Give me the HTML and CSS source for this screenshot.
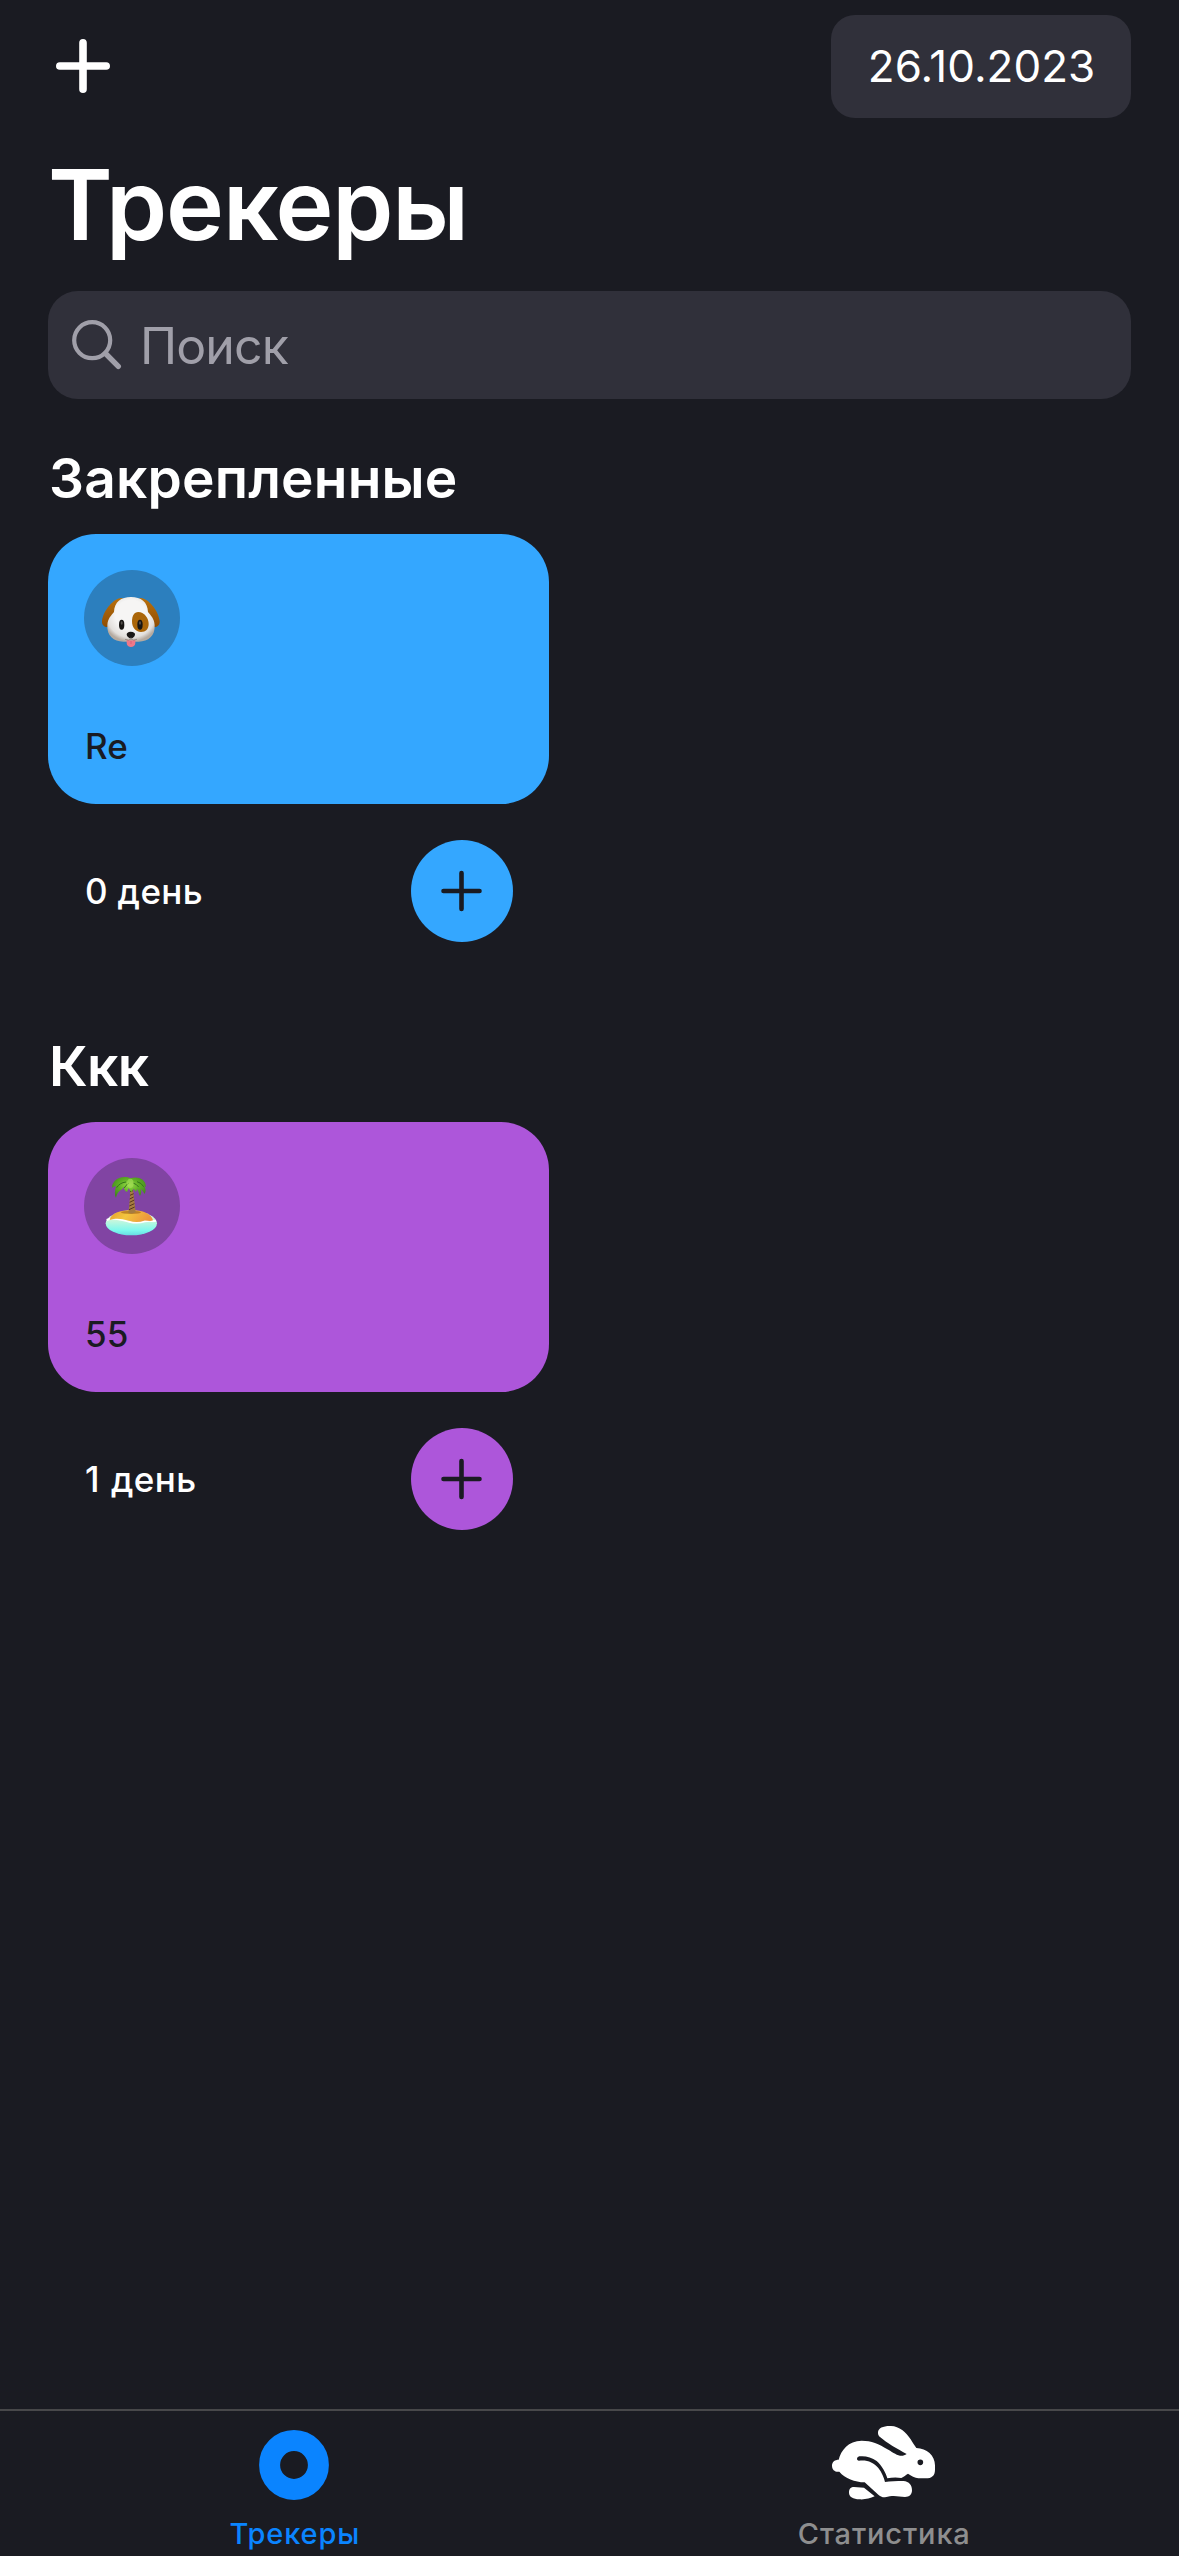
FILE: index.html
```html
<!DOCTYPE html>
<html lang="ru">
<head>
<meta charset="utf-8">
<title>Трекеры</title>
<link rel="stylesheet" href="styles.css">
</head>
<body>
<div class="app">
  <main class="content">
    <header class="topbar">
      <button class="add" aria-label="Добавить">
        <svg width="54" height="54" viewBox="0 0 54 54"><path d="M27 3.8v46.4M3.8 27h46.4" stroke="#fff" stroke-width="7.6" stroke-linecap="round"/></svg>
      </button>
      <div class="date"><span>26.10.2023</span></div>
    </header>
    <h1 class="title">Трекеры</h1>
    <div class="search">
      <svg width="50" height="50" viewBox="0 0 50 50" fill="none" stroke="#a09fa9"><circle cx="20.2" cy="20.2" r="18" stroke-width="4.2"/><path d="M33.5 33.5L46.3 46.3" stroke-width="5.4" stroke-linecap="round"/></svg>
      <span class="placeholder">Поиск</span>
    </div>

    <section class="category">
      <h2 class="category-title pinned">Закрепленные</h2>
      <article class="tracker blue">
        <div class="card">
          <svg class="emoji" width="96" height="96" viewBox="12 15 288 288">
            <defs>
              <radialGradient id="fur" cx=".5" cy=".4" r=".6"><stop offset=".55" stop-color="#f6f5f4"/><stop offset=".85" stop-color="#e2dfdc"/><stop offset="1" stop-color="#b5aaa0"/></radialGradient>
              <linearGradient id="ear" x1="0" y1="0" x2="0" y2="1"><stop offset="0" stop-color="#b9700d"/><stop offset="1" stop-color="#8f4d03"/></linearGradient>
            </defs>
            <circle class="badge" cx="156" cy="159" r="144"/>
            <path fill="url(#ear)" d="M128 99C106 95 70 133 66 168c-1 11 6 18 14 18 14 0 22-16 26-36zM178 99c22-4 57 34 61 69 1 11-6 18-14 18-14 0-22-16-26-36z"/>
            <path fill="url(#fur)" d="M153 96c30 0 50 15 51 45 8 10 19 20 20 39 2 33-19 49-48 50h-46c-29-1-50-17-48-50 1-19 12-29 20-39 1-30 21-45 51-45z"/>
            <path fill="#aa6508" d="M175 141c17 0 31 18 31 36 0 15-9 24-23 24-17 0-27-14-27-32 0-16 6-28 19-28z"/>
            <ellipse cx="125" cy="179" rx="8" ry="15" fill="#171513"/><ellipse cx="180" cy="179" rx="8" ry="15" fill="#171513"/>
            <ellipse cx="125" cy="174" rx="3" ry="5" fill="#54504c"/><ellipse cx="180" cy="174" rx="3" ry="5" fill="#54504c"/>
            <path fill="#ee7889" d="M140 224c7 3 19 3 26 0v10c0 16-26 16-26 0z"/><path d="M153 227v10" stroke="#c95770" stroke-width="2"/>
            <path fill="#191716" d="M152 200c9 0 14 4 13 9-1 6-7 11-12 11s-12-5-13-11c0-5 4-9 12-9z"/>
            <path d="M153 217v6M135 223q12 5 18-1 7 6 18 1" fill="none" stroke="#81766c" stroke-width="2"/>
          </svg>
          <span class="name">Re</span>
        </div>
        <footer class="progress">
          <span class="days">0 день</span>
          <button class="done" aria-label="Отметить"><svg width="42" height="42" viewBox="0 0 42 42"><path d="M20.5 3v36M2.500 21h36" stroke="#1a1b22" stroke-width="4.6" stroke-linecap="round"/></svg></button>
        </footer>
      </article>
    </section>

    <section class="category">
      <h2 class="category-title short">Ккк</h2>
      <article class="tracker purple">
        <div class="card">
          <svg class="emoji" width="96" height="96" viewBox="12 18 288 288">
            <defs>
              <linearGradient id="sea" x1="0" y1="0" x2="0" y2="1"><stop offset=".3" stop-color="#d6f6d9"/><stop offset=".8" stop-color="#7bf8ee"/><stop offset="1" stop-color="#67dce2"/></linearGradient>
              <linearGradient id="sand" x1="0" y1="0" x2="1" y2=".2"><stop offset="0" stop-color="#e79b2d"/><stop offset=".45" stop-color="#f3c63e"/><stop offset="1" stop-color="#ee953c"/></linearGradient>
              <radialGradient id="leaf" cx=".5" cy=".4" r=".6"><stop offset="0" stop-color="#9bdc4c"/><stop offset=".5" stop-color="#5faf24"/><stop offset="1" stop-color="#42871d"/></radialGradient>
            </defs>
            <circle class="badge" cx="156" cy="162" r="144"/>
            <ellipse cx="154" cy="214" rx="77" ry="36" fill="url(#sea)"/>
            <path d="M80 204c22-10 43 0 68 5 21 5 34 3 46-1 12-3 24 0 34-2" fill="none" stroke="#fff" stroke-width="6"/>
            <path fill="url(#sand)" d="M89 204c3-19 31-30 65-30s61 12 65 31c-8 5-17 0-27 1-14 5-29 5-45 0-21-5-37-9-58-2z"/>
            <ellipse cx="153" cy="181" rx="30" ry="5" fill="#8c4b10" opacity=".5"/>
            <path fill="#a67b40" d="M150 105h9c1 25 6 50 8 76-7 4-15 4-22 1 4-27 6-52 5-77z"/>
            <path d="M150 119l9-3m-9 14l11-5m-12 16l12-6m-12 16l14-7m-15 18l15-7m-16 18l17-8" stroke="#55351d" stroke-width="3"/>
            <path fill="url(#leaf)" d="M151 79c-12-8-37-4-47 8-6 7-10 17-6 20 3-3 7-4 10-5-4 14-5 28 0 36 3-15 10-22 19-26l4-8c0 8 5 14 10 16l5-11 8 12 7-11 7 10 4-9c4 8 4 16 8 21 4-7 5-14 2-21 5 3 9 9 11 15 6-6 4-16 0-23l5 2c0-15-10-27-26-28-8-1-15 0-21 2z"/>
            <path fill="none" stroke="#347619" stroke-width="3" d="M138 90q-19 2-28 17m37-14q-11 7-14 15m26-15q11 3 17 12m-5-16q13 3 20 15"/>
            <ellipse cx="151" cy="94" rx="10" ry="14" fill="#a4df56" opacity=".65"/>
          </svg>
          <span class="name">55</span>
        </div>
        <footer class="progress">
          <span class="days one">1 день</span>
          <button class="done" aria-label="Отметить"><svg width="42" height="42" viewBox="0 0 42 42"><path d="M20.5 3v36M2.500 21h36" stroke="#1a1b22" stroke-width="4.6" stroke-linecap="round"/></svg></button>
        </footer>
      </article>
    </section>
  </main>

  <nav class="tabs">
    <a class="tab active">
      <span class="tab-icon"><svg width="70" height="70" viewBox="0 0 70 70"><circle cx="35" cy="35" r="24.4" fill="none" stroke="#0a84ff" stroke-width="21"/></svg></span>
      <span class="tab-label">Трекеры</span>
    </a>
    <a class="tab">
      <span class="tab-icon"><svg width="107" height="77" viewBox="150 80 321 231" fill="#fff" overflow="visible">
        <path fill-rule="evenodd" d="M294 97C294 82 312 76 333 77C358 78 378 95 392 117C398 127 404 136 409 143C440 144 465 165 465 195V208C465 226 455 234 437 234H415C405 233 393 226 384 220C377 223 372 230 364 233C350 230 335 231 322 234C318 218 305 195 290 182C275 170 255 166 238 168C229 170 229 181 237 181C262 178 280 186 295 203C305 215 312 232 315 245C330 243 350 242 370 242C388 243 396 255 396 270C396 283 388 290 375 290C355 290 345 283 315 291C305 291 300 287 295 283L254 246C225 245 195 235 178 214C165 216 156 208 156 196C156 184 165 178 176 178C183 150 205 121 245 121C275 121 295 130 325 148C345 160 362 174 380 161C350 145 320 128 301 111C295 106 294 102 294 97ZM412.500 186a8.500 8.500 0 1 0 17 0a8.500 8.500 0 1 0-17 0Z"/>
        <path d="M207 277C207 265 213 260 222 260L252 262L284 288C270 295 255 298 238 297C220 296 207 290 207 277Z"/>
      </svg></span>
      <span class="tab-label">Статистика</span>
    </a>
  </nav>
</div>
</body>
</html>
```

FILE: styles.css
```css
* { box-sizing: border-box; }

body {
  margin: 0;
  background: #1a1b22;
  color: #fff;
  font-family: Inter, "Noto Sans", sans-serif;
}

svg { display: block; flex: none; }

button {
  display: flex;
  align-items: center;
  justify-content: center;
  padding: 0;
  border: 0;
  background: none;
}

.app {
  display: flex;
  flex-direction: column;
  width: 1179px;
  height: 2556px;
  overflow: hidden;
}

.content { flex: 1; padding: 15px 48px 0; }

.topbar {
  display: flex;
  align-items: center;
  justify-content: space-between;
  height: 103px;
  padding-left: 8px;
}

.add { margin-bottom: 1px; }

.date {
  display: flex;
  align-items: center;
  justify-content: center;
  width: 300px;
  height: 103px;
  padding: 0 0 1px 1px;
  border-radius: 24px;
  background: #30303a;
  font-size: 44px;
}

.title {
  margin: 27px 0 0;
  font-size: 98px;
  line-height: 120px;
  font-weight: 600;
  letter-spacing: -1.1px;
}

.search {
  display: flex;
  align-items: center;
  gap: 18px;
  height: 108px;
  margin-top: 26px;
  padding-left: 24px;
  border-radius: 30px;
  background: #30303a;
}

.placeholder {
  padding-top: 2px;
  color: #a09fa9;
  font-size: 50px;
  letter-spacing: -0.9px;
}

.category { margin-top: 46px; }
.category + .category { margin-top: 91px; }

.category-title {
  margin: 0 0 23px;
  padding-left: 1px;
  font-size: 55px;
  line-height: 66px;
  font-weight: 600;
  letter-spacing: 0.2px;
}

.short { letter-spacing: -0.6px; }

.tracker { width: 501px; }
.blue { --accent: #34a7ff; --badge: #2c7fbe; }
.purple { --accent: #ad56da; --badge: #8144a3; }

.card {
  display: flex;
  flex-direction: column;
  justify-content: space-between;
  height: 270px;
  padding: 36px 36px 31px;
  border-radius: 48px;
  background: var(--accent);
}

.badge { fill: var(--badge); }

.name {
  padding-left: 1px;
  color: #1a1b22;
  font-size: 35px;
  line-height: 54px;
  font-weight: 500;
}

.progress {
  display: flex;
  align-items: center;
  justify-content: space-between;
  height: 138px;
  padding: 36px 36px 0;
}

.days {
  padding-left: 1px;
  font-size: 35px;
  font-weight: 500;
  letter-spacing: 0.35px;
}

.one { word-spacing: 1.5px; }

.done {
  width: 102px;
  height: 102px;
  border-radius: 50%;
  background: var(--accent);
}

.tabs {
  display: flex;
  height: 147px;
  border-top: 2px solid #48484a;
}

.tab {
  flex: 1;
  display: flex;
  flex-direction: column;
  align-items: center;
  padding-right: 2px;
  color: #8e8e8f;
}

.active { color: #0a84ff; }

.tab-icon {
  display: flex;
  align-items: center;
  height: 70px;
  margin-top: 19px;
}

.tab-label {
  margin-top: 16px;
  padding-left: 2px;
  font-size: 29px;
  line-height: 36px;
  font-weight: 500;
  letter-spacing: 0.85px;
}
```
